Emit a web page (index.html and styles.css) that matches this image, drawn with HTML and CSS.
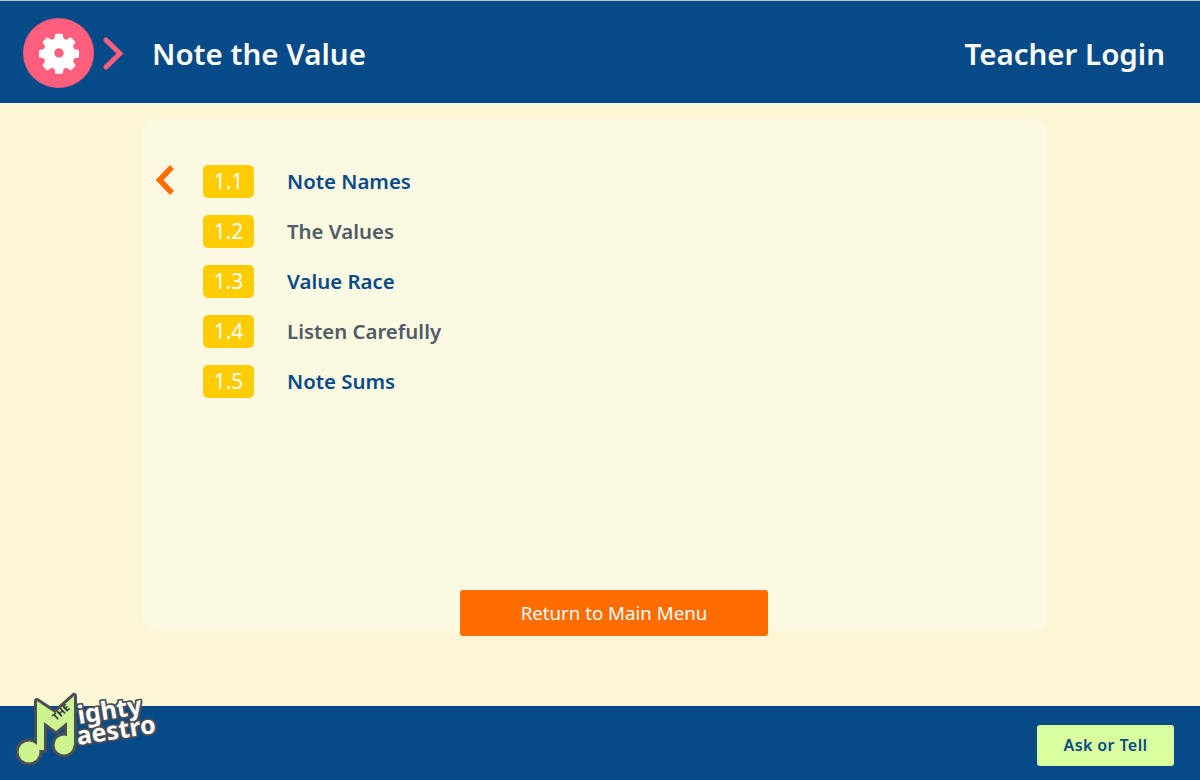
FILE: index.html
```html
<!DOCTYPE html>
<html lang="en">
<head>
<meta charset="utf-8">
<title>Note the Value</title>
<link rel="stylesheet" href="styles.css">
</head>
<body>
<div class="page">
  <header class="topbar">
    <div class="brand">
      <div class="gear-badge">
        <svg class="gear" viewBox="0 0 42 42" aria-hidden="true">
          <path class="gear-shape" fill-rule="evenodd" d="M18 2.500h6l1 4.700 3.600 1.500 4-2.700 4.200 4.200-2.700 4 1.500 3.600 4.700 1v6l-4.700 1-1.500 3.600 2.700 4-4.200 4.200-4-2.700-3.600 1.500-1 4.700h-6l-1-4.700-3.600-1.500-4 2.700-4.200-4.200 2.700-4-1.500-3.600-4.700-1v-6l4.700-1 1.500-3.600-2.700-4 4.200-4.200 4 2.700 3.600-1.500zM21 15.500a5.500 5.500 0 1 0 0 11 5.500 5.500 0 0 0 0-11z"/>
        </svg>
      </div>
      <svg class="chevron-right" viewBox="0 0 20 33" aria-hidden="true">
        <path d="M3 3l14 13.500L3 30" fill="none" stroke="#ff5f7c" stroke-width="5" stroke-linecap="round"/>
      </svg>
      <h1 class="title">Note the Value</h1>
    </div>
    <a class="login">Teacher Login</a>
  </header>

  <main class="content">
    <section class="panel">
      <ul class="lessons">
        <li class="lesson">
          <span class="marker">
            <svg class="chevron-left" viewBox="0 0 20 30" aria-hidden="true">
              <path d="M17 2L4.500 15 17 28" fill="none" stroke="#ff6c00" stroke-width="5.500"/>
            </svg>
          </span>
          <span class="num">1.1</span><span class="name name-blue">Note Names</span>
        </li>
        <li class="lesson"><span class="marker"></span><span class="num">1.2</span><span class="name">The Values</span></li>
        <li class="lesson"><span class="marker"></span><span class="num">1.3</span><span class="name name-blue">Value Race</span></li>
        <li class="lesson"><span class="marker"></span><span class="num">1.4</span><span class="name">Listen Carefully</span></li>
        <li class="lesson"><span class="marker"></span><span class="num">1.5</span><span class="name name-blue">Note Sums</span></li>
      </ul>
      <a class="return">Return to Main Menu</a>
    </section>
  </main>

  <footer class="footer">
    <a class="ask">Ask or Tell</a>
  </footer>

  <div class="logo">
    <svg class="logo-note" viewBox="14 690 70 80" aria-hidden="true">
      <g class="note-outline">
        <path d="M37 701L55 713 74 696V745H67V722L56 731 44 722V750H37Z"/>
        <circle cx="29" cy="752" r="10.500"/>
        <circle cx="64" cy="745" r="9.500"/>
      </g>
      <g class="note-fill">
        <path d="M37 701L55 713 74 696V745H67V722L56 731 44 722V750H37Z"/>
        <circle cx="29" cy="752" r="10.500"/>
        <circle cx="64" cy="745" r="9.500"/>
      </g>
    </svg>
    <span class="logo-the">THE</span>
    <span class="logo-word logo-ighty">ighty</span>
    <span class="logo-word logo-aestro">aestro</span>
  </div>
</div>
</body>
</html>
```
FILE: styles.css
```css
* { box-sizing: border-box; }

html, body {
  margin: 0;
  padding: 0;
}

body {
  font-family: "Noto Sans", "Open Sans", sans-serif;
  background: #fdf6d6;
}

.page {
  position: relative;
  display: flex;
  flex-direction: column;
  width: 1200px;
  height: 780px;
  overflow: hidden;
}

.topbar {
  flex: none;
  display: flex;
  align-items: center;
  justify-content: space-between;
  height: 103px;
  padding: 2px 35px 0 23px;
  background: #064a87;
  border-top: 1px solid #b9c4cf;
  color: #fff;
}

.brand {
  display: flex;
  align-items: center;
}

.gear-badge {
  display: flex;
  align-items: center;
  justify-content: center;
  width: 71px;
  height: 70px;
  border-radius: 50%;
  background: #ff5f7c;
}

.gear {
  width: 42px;
  height: 42px;
}

.gear-shape {
  fill: #fff;
  stroke: #fff;
  stroke-width: 1.500;
  stroke-linejoin: round;
}

.chevron-right {
  width: 20px;
  height: 33px;
  margin-left: 9px;
}

.title {
  margin: 1px 0 0 29px;
  font-size: 29.500px;
  font-weight: 600;
}

.login {
  margin-top: 1px;
  font-size: 29.500px;
  font-weight: 600;
}

.content {
  flex: 1;
  min-height: 0;
  padding: 16px 153px 75px 141px;
}

.panel {
  display: flex;
  flex-direction: column;
  height: 100%;
  padding-top: 37px;
  border-radius: 16px;
  background: #fcf9e3;
}

.lessons {
  flex: 1;
  margin: 0;
  padding: 0;
  list-style: none;
}

.lesson {
  display: flex;
  align-items: center;
  height: 50px;
}

.marker {
  display: flex;
  justify-content: flex-end;
  width: 34px;
  margin-right: 28px;
  margin-top: -3px;
}

.chevron-left {
  width: 20px;
  height: 30px;
}

.num {
  width: 51px;
  height: 33px;
  margin-top: 1px;
  margin-right: 33px;
  border-radius: 5px;
  background: #ffcc00;
  color: #fff;
  font-size: 21px;
  line-height: 32px;
  text-align: center;
}

.name {
  margin-top: -1px;
  color: #4f5b66;
  font-size: 20.400px;
  font-weight: 600;
}

.name-blue {
  color: #064a87;
}

.return {
  align-self: flex-start;
  width: 308px;
  height: 46px;
  margin-left: 319px;
  margin-bottom: -5px;
  border-radius: 3px;
  background: #ff6c00;
  color: #fff;
  font-size: 18.700px;
  line-height: 46px;
  text-align: center;
}

.footer {
  flex: none;
  display: flex;
  align-items: center;
  justify-content: flex-end;
  height: 74px;
  padding: 5px 26px 0 0;
  background: #064a87;
}

.ask {
  width: 137px;
  height: 41px;
  border-radius: 3px;
  background: #daff9f;
  color: #064a87;
  font-size: 16px;
  font-weight: 600;
  line-height: 40px;
  letter-spacing: 0.4px;
  text-align: center;
}

.logo {
  position: absolute;
  left: 14px;
  top: 690px;
  width: 150px;
  height: 80px;
}

.logo-note {
  position: absolute;
  left: 0;
  top: 0;
  width: 70px;
  height: 80px;
}

.note-outline {
  fill: #4a4f55;
  stroke: #4a4f55;
  stroke-width: 6;
  stroke-linejoin: round;
}

.note-fill {
  fill: #cdf58f;
}

.logo-the {
  position: absolute;
  left: 37px;
  top: 15px;
  color: #33393f;
  font-size: 10px;
  font-weight: 800;
  transform: rotate(-42deg);
}

.logo-word {
  position: absolute;
  color: #fff;
  font-family: "Noto Sans", sans-serif;
  font-weight: 700;
  font-size: 25px;
  line-height: 30px;
  transform: rotate(-9deg);
  text-shadow: 1.500px 0 0 #4a4f55, -1.500px 0 0 #4a4f55, 0 1.500px 0 #4a4f55, 0 -1.500px 0 #4a4f55, 1.500px 1.500px 0 #4a4f55, -1.500px -1.500px 0 #4a4f55, 1.500px -1.500px 0 #4a4f55, -1.500px 1.500px 0 #4a4f55;
}

.logo-ighty {
  left: 63px;
  top: 4px;
}

.logo-aestro {
  left: 62px;
  top: 24px;
}
```
